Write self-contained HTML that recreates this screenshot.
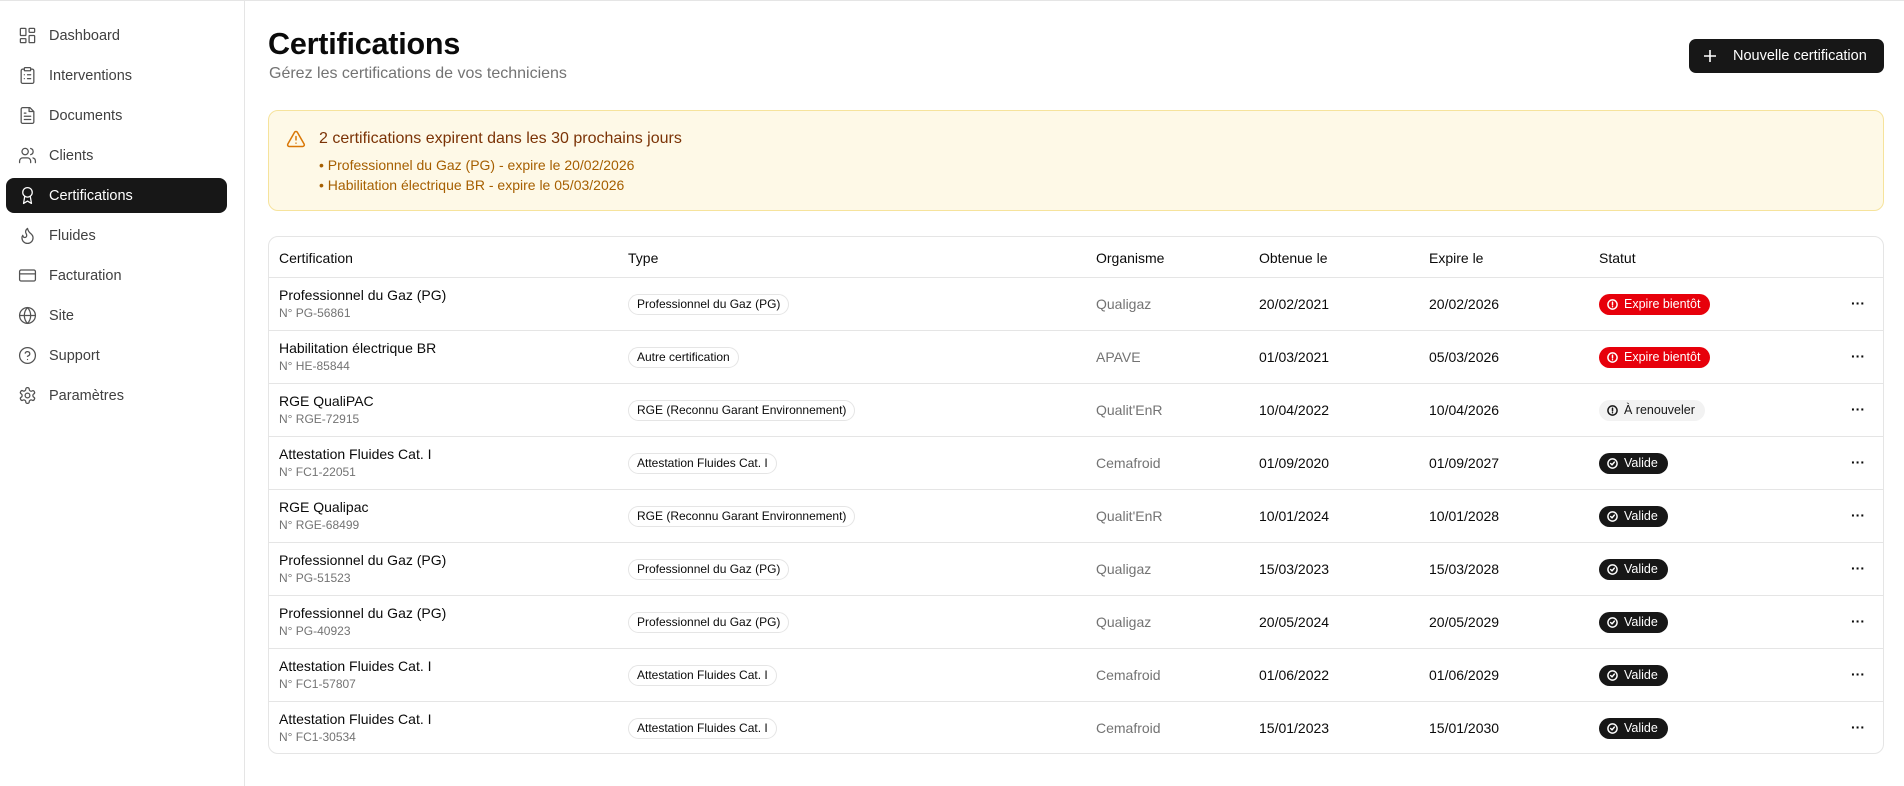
<!DOCTYPE html>
<html><head><meta charset="utf-8"><style>
*{box-sizing:border-box;margin:0;padding:0}
body{width:1904px;height:785px;overflow:hidden;background:#fff;font-family:"Liberation Sans",sans-serif;color:#0a0a0a;position:relative;border-top:1px solid #e5e5e5}
.side{position:absolute;left:0;top:0;width:245px;height:785px;border-right:1px solid #e5e5e5}
.nav{position:absolute;left:6px;width:221px;height:35px;border-radius:8px;display:flex;align-items:center;font-size:14.5px;color:#404040}
.nav svg{position:absolute;left:12px;width:19px;height:19px;fill:none;stroke:#525252;stroke-width:1.6;stroke-linecap:round;stroke-linejoin:round}
.nav span{position:absolute;left:43px}
.nav.act{background:#171717;color:#fff}
.nav.act svg{stroke:#fff}
h1{position:absolute;left:268px;top:26px;font-size:30.5px;font-weight:700;letter-spacing:-0.2px}
.sub{position:absolute;left:269px;top:64px;font-size:16px;color:#737373}
.btn{position:absolute;left:1689px;top:38px;width:195px;height:34px;background:#171717;border-radius:7px;color:#fff;font-size:14.5px;display:flex;align-items:center}
.btn span{position:absolute;left:44px}
.alert{position:absolute;left:268px;top:109px;width:1616px;height:101px;background:#fef9e7;border:1px solid #f6e39c;border-radius:10px}
.alert .t{position:absolute;left:50px;top:19px;font-size:16px;color:#7b3306}
.alert .l{position:absolute;left:50px;font-size:14px;color:#a65f00}
.tbl{position:absolute;left:268px;top:235px;width:1616px;height:518px;border:1px solid #e5e5e5;border-radius:10px}
.hd{position:absolute;top:0;left:0;right:0;height:41px;border-bottom:1px solid #e5e5e5;font-size:14px}
.hd div,.row>div{position:absolute}
.hd div{top:13px}
.row{position:absolute;left:0;right:0;height:53px;border-bottom:1px solid #e5e5e5;font-size:14px}
.row:last-child{border-bottom:none}
.n{top:9px;left:10px}
.c{top:28px;left:10px;font-size:12px;color:#737373}
.pill{top:16px;left:359px;height:21px;padding:0 8px;border:1px solid #e5e5e5;border-radius:11px;font-size:12px;line-height:19px}
.org{top:18px;left:827px;color:#737373}
.d1{top:18px;left:990px}
.d2{top:18px;left:1160px}
.b{top:16px;left:1330px;height:21px;border-radius:11px;font-size:12.5px;line-height:21px;padding:0 10px 0 25px;color:#fff}
.b svg{position:absolute;left:8px;top:5px;width:11px;height:11px;fill:none;stroke:currentColor;stroke-width:1.6;stroke-linecap:round;stroke-linejoin:round}
.red{background:#e7000b}.ok{background:#171717}.gr{background:#f2f2f2;color:#171717}
.dots{top:17px;left:1582px;font-size:14px;font-weight:700}
</style></head><body>
<div class="side">
<div class="nav" style="top:17px"><svg viewBox="0 0 24 24"><rect x="3" y="3" width="7" height="9" rx="1"/><rect x="14" y="3" width="7" height="5" rx="1"/><rect x="14" y="12" width="7" height="9" rx="1"/><rect x="3" y="16" width="7" height="5" rx="1"/></svg><span>Dashboard</span></div>
<div class="nav" style="top:57px"><svg viewBox="0 0 24 24"><rect x="8" y="2" width="8" height="4" rx="1"/><path d="M16 4h2a2 2 0 0 1 2 2v14a2 2 0 0 1-2 2H6a2 2 0 0 1-2-2V6a2 2 0 0 1 2-2h2M12 11h4M12 16h4M8 11h.01M8 16h.01"/></svg><span>Interventions</span></div>
<div class="nav" style="top:97px"><svg viewBox="0 0 24 24"><path d="M15 2H6a2 2 0 0 0-2 2v16a2 2 0 0 0 2 2h12a2 2 0 0 0 2-2V7z"/><path d="M14 2v5h5M16 13H8M16 17H8M10 9H8"/></svg><span>Documents</span></div>
<div class="nav" style="top:137px"><svg viewBox="0 0 24 24"><path d="M16 21v-2a4 4 0 0 0-4-4H6a4 4 0 0 0-4 4v2"/><circle cx="9" cy="7" r="4"/><path d="M22 21v-2a4 4 0 0 0-3-3.9M16 3.1a4 4 0 0 1 0 7.8"/></svg><span>Clients</span></div>
<div class="nav act" style="top:177px"><svg viewBox="0 0 24 24"><circle cx="12" cy="8" r="6"/><path d="M15.5 12.9 17 22l-5-3-5 3 1.5-9.1"/></svg><span>Certifications</span></div>
<div class="nav" style="top:217px"><svg viewBox="0 0 24 24"><path d="M8.5 14.5A2.5 2.5 0 0 0 11 12c0-1.4-.5-2-1-3-1.1-2.1-.2-4 2-6 .5 2.5 2 4.9 4 6.5 2 1.6 3 3.5 3 5.5a7 7 0 1 1-14 0c0-1.2.4-2.3 1-3.2.4 1.7 1.3 2.7 2.5 2.7z"/></svg><span>Fluides</span></div>
<div class="nav" style="top:257px"><svg viewBox="0 0 24 24"><rect x="2" y="5" width="20" height="14" rx="2"/><path d="M2 10h20"/></svg><span>Facturation</span></div>
<div class="nav" style="top:297px"><svg viewBox="0 0 24 24"><circle cx="12" cy="12" r="10"/><path d="M12 2a14.5 14.5 0 0 0 0 20 14.5 14.5 0 0 0 0-20M2 12h20"/></svg><span>Site</span></div>
<div class="nav" style="top:337px"><svg viewBox="0 0 24 24"><circle cx="12" cy="12" r="10"/><path d="M9.1 9a3 3 0 0 1 5.8 1c0 2-3 3-3 3M12 17h.01"/></svg><span>Support</span></div>
<div class="nav" style="top:377px"><svg viewBox="0 0 24 24"><path d="M12.2 2h-.4a2 2 0 0 0-2 2v.2a2 2 0 0 1-1 1.7l-.4.3a2 2 0 0 1-2 0l-.2-.1a2 2 0 0 0-2.7.7l-.2.4a2 2 0 0 0 .7 2.7l.2.1a2 2 0 0 1 1 1.7v.5a2 2 0 0 1-1 1.8l-.2.1a2 2 0 0 0-.7 2.7l.2.4a2 2 0 0 0 2.7.7l.2-.1a2 2 0 0 1 2 0l.4.3a2 2 0 0 1 1 1.7v.2a2 2 0 0 0 2 2h.4a2 2 0 0 0 2-2v-.2a2 2 0 0 1 1-1.7l.4-.3a2 2 0 0 1 2 0l.2.1a2 2 0 0 0 2.7-.7l.2-.4a2 2 0 0 0-.7-2.7l-.2-.1a2 2 0 0 1-1-1.7v-.5a2 2 0 0 1 1-1.7l.2-.1a2 2 0 0 0 .7-2.7l-.2-.4a2 2 0 0 0-2.7-.7l-.2.1a2 2 0 0 1-2 0l-.4-.3a2 2 0 0 1-1-1.7V4a2 2 0 0 0-2-2z"/><circle cx="12" cy="12" r="3"/></svg><span>Paramètres</span></div>
</div>
<h1>Certifications</h1>
<div class="sub">Gérez les certifications de vos techniciens</div>
<div class="btn"><svg style="position:absolute;left:14px;top:10px" width="14" height="14" viewBox="0 0 14 14" fill="none" stroke="#fff" stroke-width="1.6"><path d="M7 1v12M1 7h12"/></svg><span>Nouvelle certification</span></div>
<div class="alert">
<svg style="position:absolute;left:17px;top:18px" width="20" height="20" viewBox="0 0 24 24" fill="none" stroke="#d97706" stroke-width="1.8" stroke-linecap="round" stroke-linejoin="round"><path d="m21.7 18-8-14a2 2 0 0 0-3.5 0l-8 14A2 2 0 0 0 4 21h16a2 2 0 0 0 1.7-3zM12 9v4M12 17h.01"/></svg>
<div class="t">2 certifications expirent dans les 30 prochains jours</div>
<div class="l" style="top:46px">• Professionnel du Gaz (PG) - expire le 20/02/2026</div>
<div class="l" style="top:66px">• Habilitation électrique BR - expire le 05/03/2026</div>
</div>
<div class="tbl">
<div class="hd"><div style="left:10px">Certification</div><div style="left:359px">Type</div><div style="left:827px">Organisme</div><div style="left:990px">Obtenue le</div><div style="left:1160px">Expire le</div><div style="left:1330px">Statut</div></div>
<div style="position:absolute;top:41px;left:0;right:0;bottom:0">
<div class="row" style="top:0"><div class="n">Professionnel du Gaz (PG)</div><div class="c">N° PG-56861</div><div class="pill">Professionnel du Gaz (PG)</div><div class="org">Qualigaz</div><div class="d1">20/02/2021</div><div class="d2">20/02/2026</div><div class="b red"><svg viewBox="0 0 12 12"><circle cx="6" cy="6" r="5"/><path d="M6 3.5v3M6 8.5h.01"/></svg>Expire bientôt</div><div class="dots">···</div></div>
<div class="row" style="top:53px"><div class="n">Habilitation électrique BR</div><div class="c">N° HE-85844</div><div class="pill">Autre certification</div><div class="org">APAVE</div><div class="d1">01/03/2021</div><div class="d2">05/03/2026</div><div class="b red"><svg viewBox="0 0 12 12"><circle cx="6" cy="6" r="5"/><path d="M6 3.5v3M6 8.5h.01"/></svg>Expire bientôt</div><div class="dots">···</div></div>
<div class="row" style="top:106px"><div class="n">RGE QualiPAC</div><div class="c">N° RGE-72915</div><div class="pill">RGE (Reconnu Garant Environnement)</div><div class="org">Qualit'EnR</div><div class="d1">10/04/2022</div><div class="d2">10/04/2026</div><div class="b gr"><svg viewBox="0 0 12 12"><circle cx="6" cy="6" r="5"/><path d="M6 3.5v3M6 8.5h.01"/></svg>À renouveler</div><div class="dots">···</div></div>
<div class="row" style="top:159px"><div class="n">Attestation Fluides Cat. I</div><div class="c">N° FC1-22051</div><div class="pill">Attestation Fluides Cat. I</div><div class="org">Cemafroid</div><div class="d1">01/09/2020</div><div class="d2">01/09/2027</div><div class="b ok"><svg viewBox="0 0 12 12"><circle cx="6" cy="6" r="5"/><path d="M4 6l1.5 1.5L8 4.5"/></svg>Valide</div><div class="dots">···</div></div>
<div class="row" style="top:212px"><div class="n">RGE Qualipac</div><div class="c">N° RGE-68499</div><div class="pill">RGE (Reconnu Garant Environnement)</div><div class="org">Qualit'EnR</div><div class="d1">10/01/2024</div><div class="d2">10/01/2028</div><div class="b ok"><svg viewBox="0 0 12 12"><circle cx="6" cy="6" r="5"/><path d="M4 6l1.5 1.5L8 4.5"/></svg>Valide</div><div class="dots">···</div></div>
<div class="row" style="top:265px"><div class="n">Professionnel du Gaz (PG)</div><div class="c">N° PG-51523</div><div class="pill">Professionnel du Gaz (PG)</div><div class="org">Qualigaz</div><div class="d1">15/03/2023</div><div class="d2">15/03/2028</div><div class="b ok"><svg viewBox="0 0 12 12"><circle cx="6" cy="6" r="5"/><path d="M4 6l1.5 1.5L8 4.5"/></svg>Valide</div><div class="dots">···</div></div>
<div class="row" style="top:318px"><div class="n">Professionnel du Gaz (PG)</div><div class="c">N° PG-40923</div><div class="pill">Professionnel du Gaz (PG)</div><div class="org">Qualigaz</div><div class="d1">20/05/2024</div><div class="d2">20/05/2029</div><div class="b ok"><svg viewBox="0 0 12 12"><circle cx="6" cy="6" r="5"/><path d="M4 6l1.5 1.5L8 4.5"/></svg>Valide</div><div class="dots">···</div></div>
<div class="row" style="top:371px"><div class="n">Attestation Fluides Cat. I</div><div class="c">N° FC1-57807</div><div class="pill">Attestation Fluides Cat. I</div><div class="org">Cemafroid</div><div class="d1">01/06/2022</div><div class="d2">01/06/2029</div><div class="b ok"><svg viewBox="0 0 12 12"><circle cx="6" cy="6" r="5"/><path d="M4 6l1.5 1.5L8 4.5"/></svg>Valide</div><div class="dots">···</div></div>
<div class="row" style="top:424px"><div class="n">Attestation Fluides Cat. I</div><div class="c">N° FC1-30534</div><div class="pill">Attestation Fluides Cat. I</div><div class="org">Cemafroid</div><div class="d1">15/01/2023</div><div class="d2">15/01/2030</div><div class="b ok"><svg viewBox="0 0 12 12"><circle cx="6" cy="6" r="5"/><path d="M4 6l1.5 1.5L8 4.5"/></svg>Valide</div><div class="dots">···</div></div>
</div>
</div>
</body></html>
